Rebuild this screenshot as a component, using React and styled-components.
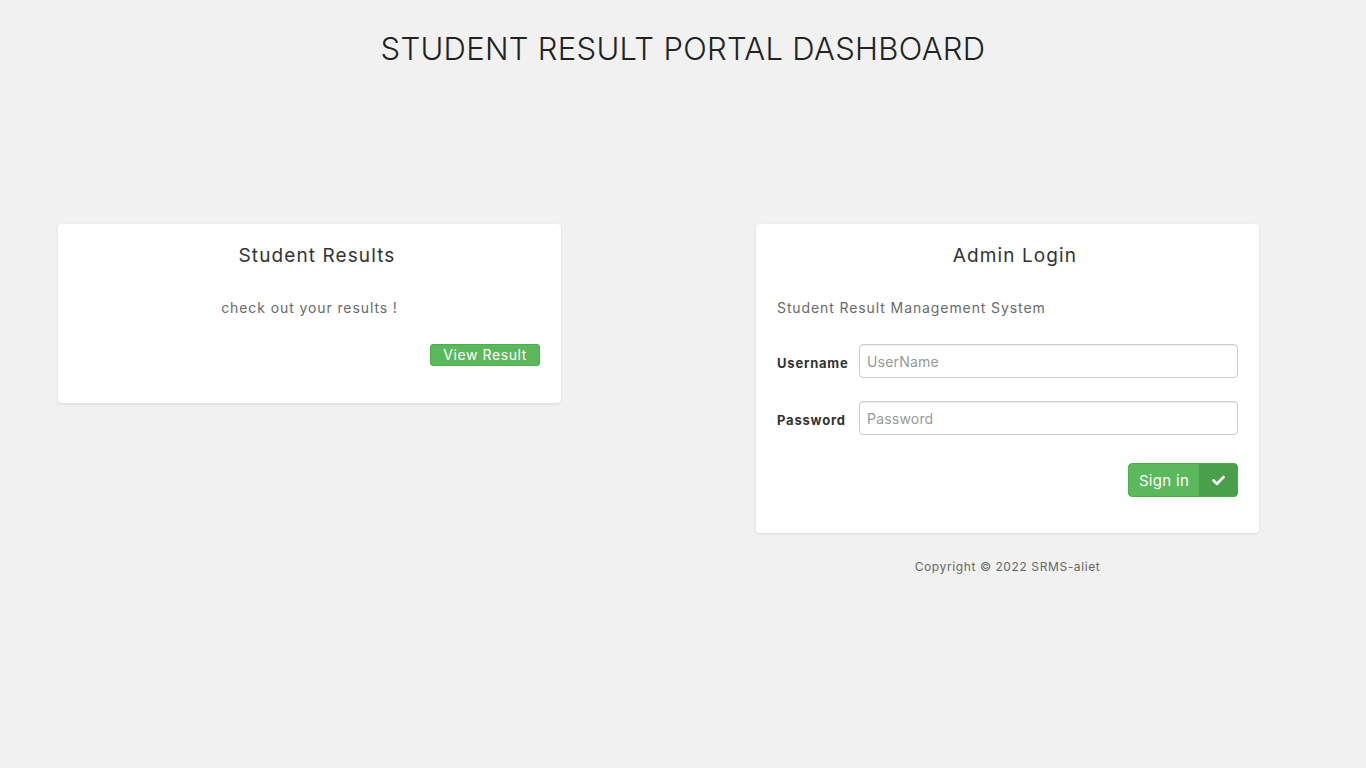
import React from 'react';
import styled, { createGlobalStyle } from 'styled-components';
import { FaCheck } from 'react-icons/fa';

const GlobalStyle = createGlobalStyle`
  html, body {
    margin: 0;
    padding: 0;
    background: #f1f1f1;
    font-family: Inter, "Noto Sans", sans-serif;
    color: #333;
  }
  * { box-sizing: border-box; }
`;

const Page = styled.div`
  min-height: 768px;
  padding-top: 28px;
`;

const Heading = styled.h1`
  margin: 0;
  text-align: center;
  font-size: 31px;
  font-weight: 300;
  letter-spacing: 0.3px;
  color: #222;
  line-height: 42px;
`;

const Row = styled.div`
  display: flex;
  align-items: flex-start;
  gap: 195px;
  padding-left: 58px;
  margin-top: 154px;
`;

const Column = styled.div`
  width: 503px;
  display: flex;
  flex-direction: column;
`;

const Card = styled.div`
  background: #fff;
  border-radius: 4px;
  box-shadow: 0 1px 3px rgba(0, 0, 0, 0.1);
  padding: 18px 21px ${(p) => p.$bottom || 36}px;
`;

const CardTitle = styled.h3`
  margin: 0 0 28px;
  padding-left: 15px;
  text-align: center;
  font-size: 19px;
  font-weight: 400;
  letter-spacing: 1.1px;
  color: #333;
  line-height: 28px;
`;

const Text = styled.p`
  margin: 0 0 26px;
  font-size: 14px;
  color: #6a6a6a;
  letter-spacing: 0.9px;
  line-height: 20px;
  text-align: ${(p) => p.$align || 'left'};
`;

const Actions = styled.div`
  display: flex;
  justify-content: flex-end;
`;

const SmallButton = styled.button`
  background: #5cb85c;
  border: 1px solid #4cae4c;
  border-radius: 3px;
  color: #fff;
  font-family: inherit;
  font-size: 14px;
  letter-spacing: 0.6px;
  height: 22px;
  padding: 0 12px;
  line-height: 20px;
  white-space: nowrap;
  cursor: pointer;
`;

const Field = styled.div`
  display: flex;
  align-items: center;
  margin-bottom: 23px;
`;

const Label = styled.label`
  width: 82px;
  font-size: 13px;
  font-weight: 700;
  color: #333;
  letter-spacing: 0.8px;
  padding-top: 4px;
  white-space: nowrap;
`;

const Input = styled.input`
  flex: 1;
  height: 34px;
  border: 1px solid #ccc;
  border-radius: 4px;
  padding: 0 7px;
  font-family: inherit;
  font-size: 14px;
  color: #555;
  box-shadow: inset 0 1px 1px rgba(0, 0, 0, 0.075);
  outline: none;

  &::placeholder {
    color: #999;
    letter-spacing: 0.2px;
  }
`;

const SignIn = styled.button`
  display: flex;
  align-items: stretch;
  height: 34px;
  padding: 0;
  border: 1px solid #4cae4c;
  border-radius: 4px;
  overflow: hidden;
  background: #5cb85c;
  color: #fff;
  font-family: inherit;
  font-size: 15px;
  letter-spacing: 0.3px;
  cursor: pointer;
  margin-top: 5px;
`;

const SignInLabel = styled.span`
  display: flex;
  align-items: center;
  justify-content: center;
  width: 70px;
  white-space: nowrap;
`;

const SignInIcon = styled.span`
  display: flex;
  align-items: center;
  justify-content: center;
  width: 38px;
  background: #4a9f4a;
`;

const Copyright = styled.p`
  margin: 26px 0 0;
  text-align: center;
  font-size: 12px;
  color: #666;
  letter-spacing: 0.6px;
`;

export default function App() {
  return (
    <Page>
      <GlobalStyle />
      <Heading>STUDENT RESULT PORTAL DASHBOARD</Heading>
      <Row>
        <Column>
          <Card $bottom={37}>
            <CardTitle>Student Results</CardTitle>
            <Text $align="center">check out your results !</Text>
            <Actions>
              <SmallButton>View Result</SmallButton>
            </Actions>
          </Card>
        </Column>
        <Column>
          <Card $bottom={36}>
            <CardTitle>Admin Login</CardTitle>
            <Text>Student Result Management System</Text>
            <Field>
              <Label>Username</Label>
              <Input placeholder="UserName" />
            </Field>
            <Field>
              <Label>Password</Label>
              <Input type="password" placeholder="Password" />
            </Field>
            <Actions>
              <SignIn>
                <SignInLabel>Sign in</SignInLabel>
                <SignInIcon>
                  <FaCheck size={13} />
                </SignInIcon>
              </SignIn>
            </Actions>
          </Card>
          <Copyright>Copyright © 2022 SRMS-aliet</Copyright>
        </Column>
      </Row>
    </Page>
  );
}
